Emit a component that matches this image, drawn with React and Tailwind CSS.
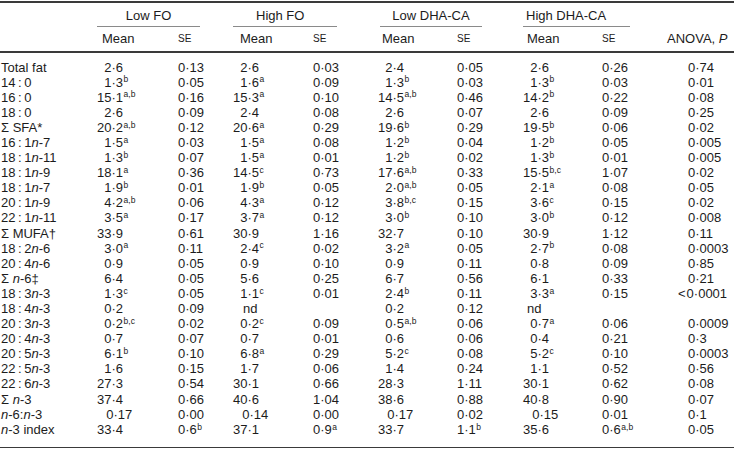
import React from "react";

const COLS = "grid grid-cols-[97px_81px_55px_80px_65px_79px_66px_79px_65px_67px]";

const N = () => <i>n</i>;
const TS = "\u2009:\u2009";

const rows = [
  [<>Total fat</>, ["2", "6"], ["0·13"], ["2", "6"], ["0·03"], ["2", "4"], ["0·05"], ["2", "6"], ["0·26"], "0·74"],
  [<>14{TS}0</>, ["1", "3", "b"], ["0·05"], ["1", "6", "a"], ["0·09"], ["1", "3", "b"], ["0·03"], ["1", "3", "b"], ["0·03"], "0·01"],
  [<>16{TS}0</>, ["15", "1", "a,b"], ["0·16"], ["15", "3", "a"], ["0·10"], ["14", "5", "a,b"], ["0·46"], ["14", "2", "b"], ["0·22"], "0·08"],
  [<>18{TS}0</>, ["2", "6"], ["0·09"], ["2", "4"], ["0·08"], ["2", "6"], ["0·07"], ["2", "6"], ["0·09"], "0·25"],
  [<>Σ SFA*</>, ["20", "2", "a,b"], ["0·12"], ["20", "6", "a"], ["0·29"], ["19", "6", "b"], ["0·29"], ["19", "5", "b"], ["0·06"], "0·02"],
  [<>16{TS}1<N />-7</>, ["1", "5", "a"], ["0·03"], ["1", "5", "a"], ["0·08"], ["1", "2", "b"], ["0·04"], ["1", "2", "b"], ["0·05"], "0·005"],
  [<>18{TS}1<N />-11</>, ["1", "3", "b"], ["0·07"], ["1", "5", "a"], ["0·01"], ["1", "2", "b"], ["0·02"], ["1", "3", "b"], ["0·01"], "0·005"],
  [<>18{TS}1<N />-9</>, ["18", "1", "a"], ["0·36"], ["14", "5", "c"], ["0·73"], ["17", "6", "a,b"], ["0·33"], ["15", "5", "b,c"], ["1·07"], "0·02"],
  [<>18{TS}1<N />-7</>, ["1", "9", "b"], ["0·01"], ["1", "9", "b"], ["0·05"], ["2", "0", "a,b"], ["0·05"], ["2", "1", "a"], ["0·08"], "0·05"],
  [<>20{TS}1<N />-9</>, ["4", "2", "a,b"], ["0·06"], ["4", "3", "a"], ["0·12"], ["3", "8", "b,c"], ["0·15"], ["3", "6", "c"], ["0·15"], "0·02"],
  [<>22{TS}1<N />-11</>, ["3", "5", "a"], ["0·17"], ["3", "7", "a"], ["0·12"], ["3", "0", "b"], ["0·10"], ["3", "0", "b"], ["0·12"], "0·008"],
  [<>Σ MUFA†</>, ["33", "9"], ["0·61"], ["30", "9"], ["1·16"], ["32", "7"], ["0·10"], ["30", "9"], ["1·12"], "0·11"],
  [<>18{TS}2<N />-6</>, ["3", "0", "a"], ["0·11"], ["2", "4", "c"], ["0·02"], ["3", "2", "a"], ["0·05"], ["2", "7", "b"], ["0·08"], "0·0003"],
  [<>20{TS}4<N />-6</>, ["0", "9"], ["0·05"], ["0", "9"], ["0·10"], ["0", "9"], ["0·11"], ["0", "8"], ["0·09"], "0·85"],
  [<>Σ <N />-6‡</>, ["6", "4"], ["0·05"], ["5", "6"], ["0·25"], ["6", "7"], ["0·56"], ["6", "1"], ["0·33"], "0·21"],
  [<>18{TS}3<N />-3</>, ["1", "3", "c"], ["0·05"], ["1", "1", "c"], ["0·01"], ["2", "4", "b"], ["0·11"], ["3", "3", "a"], ["0·15"], "<0·0001"],
  [<>18{TS}4<N />-3</>, ["0", "2"], ["0·09"], "nd", null, ["0", "2"], ["0·12"], "nd", null, ""],
  [<>20{TS}3<N />-3</>, ["0", "2", "b,c"], ["0·02"], ["0", "2", "c"], ["0·09"], ["0", "5", "a,b"], ["0·06"], ["0", "7", "a"], ["0·06"], "0·0009"],
  [<>20{TS}4<N />-3</>, ["0", "7"], ["0·07"], ["0", "7"], ["0·01"], ["0", "6"], ["0·06"], ["0", "4"], ["0·21"], "0·3"],
  [<>20{TS}5<N />-3</>, ["6", "1", "b"], ["0·10"], ["6", "8", "a"], ["0·29"], ["5", "2", "c"], ["0·08"], ["5", "2", "c"], ["0·10"], "0·0003"],
  [<>22{TS}5<N />-3</>, ["1", "6"], ["0·15"], ["1", "7"], ["0·06"], ["1", "4"], ["0·24"], ["1", "1"], ["0·52"], "0·56"],
  [<>22{TS}6<N />-3</>, ["27", "3"], ["0·54"], ["30", "1"], ["0·66"], ["28", "3"], ["1·11"], ["30", "1"], ["0·62"], "0·08"],
  [<>Σ <N />-3</>, ["37", "4"], ["0·66"], ["40", "6"], ["1·04"], ["38", "6"], ["0·88"], ["40", "8"], ["0·90"], "0·07"],
  [<><N />-6:<N />-3</>, ["0", "17", null, true], ["0·00"], ["0", "14", null, true], ["0·00"], ["0", "17", null, true], ["0·02"], ["0", "15", null, true], ["0·01"], "0·1"],
  [<><N />-3 index</>, ["33", "4"], ["0·6", "b"], ["37", "1"], ["0·9", "a"], ["33", "7"], ["1·1", "b"], ["35", "6"], ["0·6", "a,b"], "0·05"],
];

function Mean({ v, col }) {
  if (v === "nd") {
    return <div className={col === 1 ? "pl-[10px]" : "pl-[4px]"}>nd</div>;
  }
  const [i, f, s, shift] = v;
  return (
    <div className={`whitespace-nowrap ${shift ? "pl-[2px]" : ""}`}>
      <span className="inline-block w-[14.5px] text-right">{i}</span>·{f}
      {s && <sup className="text-[8.5px] ml-[0.5px]">{s}</sup>}
    </div>
  );
}

function SE({ v }) {
  if (!v) return <div />;
  return (
    <div className="whitespace-nowrap">
      {v[0]}
      {v[1] && <sup className="text-[8.5px] ml-[0.5px]">{v[1]}</sup>}
    </div>
  );
}

function P({ v }) {
  if (v.startsWith("<")) {
    return (
      <div className="pl-[21px] whitespace-nowrap">
        <span className="-ml-[10px] mr-[1px]">&lt;</span>
        {v.slice(1)}
      </div>
    );
  }
  return <div className="pl-[21px]">{v}</div>;
}

function Group({ label, rule, pad = "", align = "text-center" }) {
  return (
    <div className={`col-span-2 flex flex-col ${pad}`}>
      <div className={`${rule} flex flex-col`}>
        <div className={`pt-[5px] leading-[15px] ${align} whitespace-nowrap`}>{label}</div>
        <div className="mt-[3.5px] h-px bg-[#8a8a8a]" />
      </div>
    </div>
  );
}

export default function App() {
  return (
    <div
      className="w-[734px] h-[452px] bg-white text-[#1c1c1c] text-[13px] overflow-hidden"
      style={{ fontFamily: '"Liberation Sans", Arial, sans-serif' }}
    >
      <div className="h-px" />
      <div className="h-[1.5px] bg-[#3a3a3a]" />
      <div className={COLS}>
        <div />
        <Group label="Low FO" rule="w-[103px]" />
        <Group label="High FO" rule="w-[104px]" align="text-left pl-[23px]" />
        <Group label="Low DHA-CA" rule="w-[102px]" pad="pl-[2px]" />
        <Group label="High DHA-CA" rule="w-[107px]" align="text-left pl-[3px]" />
        <div />
      </div>
      <div className={`${COLS} mt-[3.5px] leading-[15px]`}>
        <div />
        <div className="pl-[5px]">Mean</div>
        <div className="text-[10px]">SE</div>
        <div className="pl-[7px]">Mean</div>
        <div className="text-[10px]">SE</div>
        <div className="pl-[4px]">Mean</div>
        <div className="text-[10px]">SE</div>
        <div className="pl-[4px]">Mean</div>
        <div className="text-[10px]">SE</div>
        <div className="whitespace-nowrap">
          ANOVA, <i>P</i>
        </div>
      </div>
      <div className="mt-[5.5px] h-[1.5px] bg-[#3a3a3a]" />
      <div className="mt-[7px] flex flex-col">
        {rows.map((r, idx) => (
          <div key={idx} className={`${COLS} h-[15.1px] leading-[15.1px]`}>
            <div className="pl-[1px] whitespace-nowrap">{r[0]}</div>
            <Mean v={r[1]} col={0} />
            <SE v={r[2]} />
            <Mean v={r[3]} col={1} />
            <SE v={r[4]} />
            <Mean v={r[5]} col={2} />
            <SE v={r[6]} />
            <Mean v={r[7]} col={3} />
            <SE v={r[8]} />
            <P v={r[9]} />
          </div>
        ))}
      </div>
      <div className="mt-[10px] h-[1.5px] bg-[#3a3a3a]" />
    </div>
  );
}
